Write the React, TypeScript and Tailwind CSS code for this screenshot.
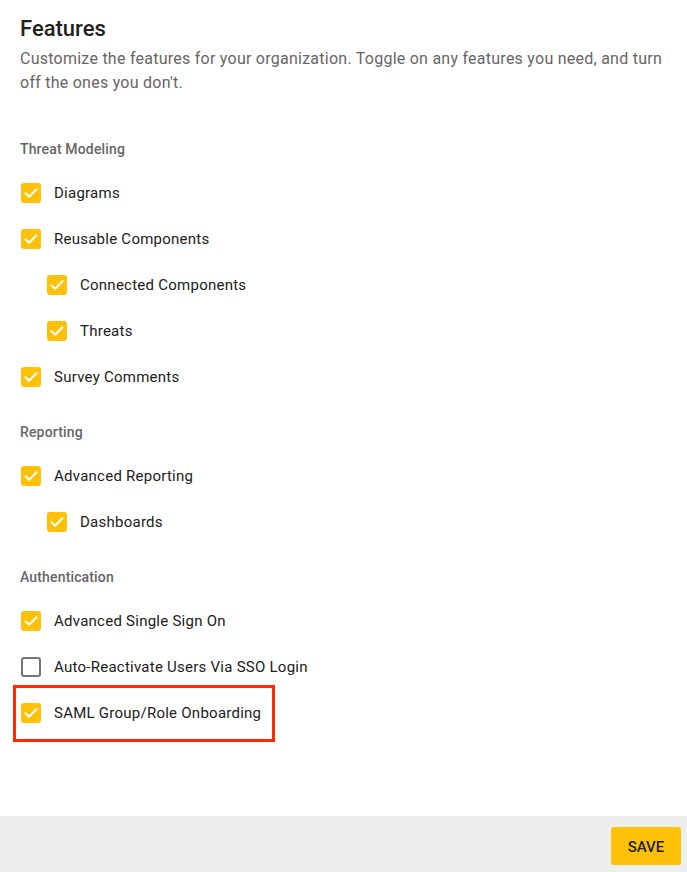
const sections = [
  {
    title: 'Threat Modeling',
    items: [
      { label: 'Diagrams', checked: true, nested: false },
      { label: 'Reusable Components', checked: true, nested: false },
      { label: 'Connected Components', checked: true, nested: true },
      { label: 'Threats', checked: true, nested: true },
      { label: 'Survey Comments', checked: true, nested: false },
    ],
  },
  {
    title: 'Reporting',
    items: [
      { label: 'Advanced Reporting', checked: true, nested: false },
      { label: 'Dashboards', checked: true, nested: true },
    ],
  },
  {
    title: 'Authentication',
    items: [
      { label: 'Advanced Single Sign On', checked: true, nested: false },
      { label: 'Auto-Reactivate Users Via SSO Login', checked: false, nested: false },
      { label: 'SAML Group/Role Onboarding', checked: true, nested: false },
    ],
  },
]

function Checkbox({ checked }: { checked: boolean }) {
  if (!checked) {
    return <span className="h-5 w-5 shrink-0 rounded-[3px] border-2 border-[#757575] bg-white" />
  }
  return (
    <span className="flex h-5 w-5 shrink-0 items-center justify-center rounded-[3px] bg-[#ffc107]">
      <svg viewBox="0 0 20 20" className="h-5 w-5" fill="none">
        <path d="M4.5 10.2l3.6 3.6 7.4-7.6" stroke="white" strokeWidth="2" strokeLinecap="round" strokeLinejoin="round" />
      </svg>
    </span>
  )
}

export default function App() {
  return (
    <div className="relative flex min-h-[872px] flex-col bg-white font-['Roboto',sans-serif]">
      <div className="flex-1 px-5 pt-[14px]">
        <h1 className="text-[22px] font-medium leading-[29px] text-[#212121]">Features</h1>
        <p className="mt-[4px] text-[16px] leading-6 tracking-[0.25px] text-[#666]">
          Customize the features for your organization. Toggle on any features you need, and turn off the ones you don't.
        </p>
        <div className="mt-[44px] flex flex-col gap-[22px]">
          {sections.map((s) => (
            <div key={s.title}>
              <div className="text-[14px] font-medium leading-5 tracking-[0.15px] text-[#666]">{s.title}</div>
              <div className="mt-[11px] flex flex-col">
                {s.items.map((it) => (
                  <label
                    key={it.label}
                    className={`flex h-[46px] items-center gap-[13px] ${it.nested ? 'pl-[27px]' : 'pl-px'}`}
                  >
                    <Checkbox checked={it.checked} />
                    <span className="text-[15px] tracking-[0.25px] text-[#212121]">{it.label}</span>
                  </label>
                ))}
              </div>
            </div>
          ))}
        </div>
      </div>
      <div className="flex h-14 items-start justify-end bg-[#eeeeee] pr-[6px] pt-[11px]">
        <button className="h-[38px] w-[70px] rounded-[3px] bg-[#ffc107] pt-[3px] text-[15px] font-medium text-[#212121]">SAVE</button>
      </div>
      <div className="pointer-events-none absolute left-[13px] top-[685px] h-[57px] w-[262px] border-[3px] border-[#ff2a00]" />
    </div>
  )
}
